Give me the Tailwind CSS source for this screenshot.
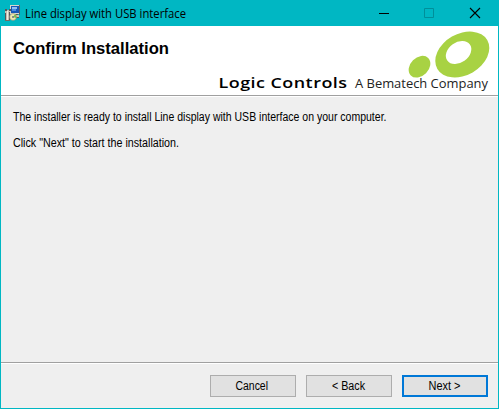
<!DOCTYPE html>
<html lang="en">
<head>
<meta charset="utf-8">
<title>Line display with USB interface</title>
<script src="https://cdn.jsdelivr.net/npm/@tailwindcss/browser@4"></script>
</head>
<body class="overflow-hidden">
<div class="flex h-[409px] w-[499px] flex-col overflow-hidden bg-[#00b7c3] px-px pb-px font-['Liberation_Sans',sans-serif] text-black">
  <header class="flex h-[26px] shrink-0 items-center pl-1">
    <svg class="h-4 w-4 shrink-0" viewBox="0 0 16 16" shape-rendering="crispEdges">
      <path d="M5 0h10v9H5z" fill="#d8d5cc"/><path d="M6 1h8v7H6z" fill="#1658b8"/>
      <path d="M7 2h5v2H7z" fill="#8fc0f5"/><path d="M7 4h4v2H7z" fill="#4c8de2"/>
      <path d="M14 0h1v10h-1z" fill="#5c6268"/>
      <path d="M5 10h9v3H5z" fill="#c8c4b5"/><path d="M8 9h5v1H8zM11 12h3v1h-3z" fill="#5d5a50"/>
      <path d="M0 5h5v10H0z" fill="#c4c0b4"/><path d="M0 4h2v2H0zM4 4h2v2H4zM0 8h1v7H0zM4 7h1v8H4z" fill="#55565a"/>
      <path d="M2 6h1v9H2z" fill="#f2eee2"/><path d="M0 15h5v1H0z" fill="#716c65"/>
      <g shape-rendering="auto"><circle cx="8" cy="12" r="3.400" fill="#eee9ae" stroke="#77756a" stroke-width=".5"/><path d="M8 12l2-2.700A3.400 3.400 0 0 1 11.300 13z" fill="#77bd50"/><circle cx="8" cy="12" r="1" fill="#6b7180"/></g>
    </svg>
    <h1 class="ml-1 w-[338px] shrink-0"><svg class="block h-[18px] w-[220px] overflow-visible font-['Open_Sans',sans-serif] text-[12px]" viewBox="0 0 220 18"><text x="0" y="13.500" textLength="161" lengthAdjust="spacingAndGlyphs">Line display with USB interface</text></svg></h1>
    <svg class="h-[26px] w-[120px] shrink-0" viewBox="363 0 120 26" fill="none">
      <path d="M379 13.500h10" stroke="#000"/>
      <path d="M424.500 8.500h9v9h-9z" stroke="#008f9a"/>
      <path d="M470 8l10 10M480 8l-10 10" stroke="#000" stroke-width="1.100"/>
    </svg>
  </header>
  <section class="flex h-[70px] shrink-0 justify-between border-b border-[#a0a0a0] bg-white">
    <h2 class="pl-3 pt-[12px] font-bold"><svg class="block h-5 w-[160px] overflow-visible" viewBox="0 0 160 20"><text x="0" y="16" textLength="156" lengthAdjust="spacingAndGlyphs" font-size="17">Confirm Installation</text></svg></h2>
    <svg class="h-[69px] w-[285px] shrink-0" viewBox="213 26 285 69">
      <ellipse cx="462.300" cy="54.500" rx="28.800" ry="20.700" transform="rotate(-30 462.300 54.500)" fill="#a8d243"/>
      <ellipse cx="458.600" cy="52.500" rx="13.800" ry="10.200" transform="rotate(-35 458.600 52.500)" fill="#fff"/>
      <ellipse cx="419.500" cy="66.700" rx="12.300" ry="9.200" transform="rotate(-45 419.500 66.700)" fill="#a8d243"/>
      <text x="218.500" y="88" class="tracking-[0.4px]" textLength="129" lengthAdjust="spacingAndGlyphs" font-family="Open Sans, sans-serif" font-size="15" font-weight="600">Logic Controls</text>
      <text x="355" y="88" textLength="133" lengthAdjust="spacingAndGlyphs" font-family="Open Sans, sans-serif" font-size="12" fill="#222">A Bematech Company</text>
    </svg>
  </section>
  <main class="flex min-h-0 flex-1 flex-col gap-3 border-t border-white bg-[#efefef] pl-3 pt-[13px] text-[12px]">
    <p><svg class="block h-[14px] w-[480px] overflow-visible" viewBox="0 0 480 14"><text x="0" y="11" textLength="373.500" lengthAdjust="spacingAndGlyphs">The installer is ready to install Line display with USB interface on your computer.</text></svg></p>
    <p><svg class="block h-[14px] w-[400px] overflow-visible" viewBox="0 0 400 14"><text x="0" y="11" textLength="166" lengthAdjust="spacingAndGlyphs">Click "Next" to start the installation.</text></svg></p>
  </main>
  <footer class="flex h-[46px] shrink-0 items-start justify-end gap-[10px] border-t border-[#a0a0a0] bg-[#efefef] pr-[10px] pt-3 text-[12px] shadow-[inset_0_1px_0_#fff]">
    <button class="flex h-[22px] w-[86px] items-center justify-center border border-[#adadad] bg-[#e1e1e1]"><svg class="block h-4 w-[84px]" viewBox="0 0 84 16"><text x="24.500" y="12" textLength="32.500" lengthAdjust="spacingAndGlyphs">Cancel</text></svg></button>
    <button class="flex h-[22px] w-[86px] items-center justify-center border border-[#adadad] bg-[#e1e1e1]"><svg class="block h-4 w-[84px]" viewBox="0 0 84 16"><text x="25" y="12" textLength="33" lengthAdjust="spacingAndGlyphs">&lt; Back</text></svg></button>
    <button class="flex h-[22px] w-[86px] items-center justify-center border-2 border-[#0078d7] bg-[#e1e1e1]"><svg class="block h-4 w-[82px]" viewBox="0 0 82 16"><text x="24.500" y="12" textLength="32" lengthAdjust="spacingAndGlyphs">Next &gt;</text></svg></button>
  </footer>
</div>
</body>
</html>
